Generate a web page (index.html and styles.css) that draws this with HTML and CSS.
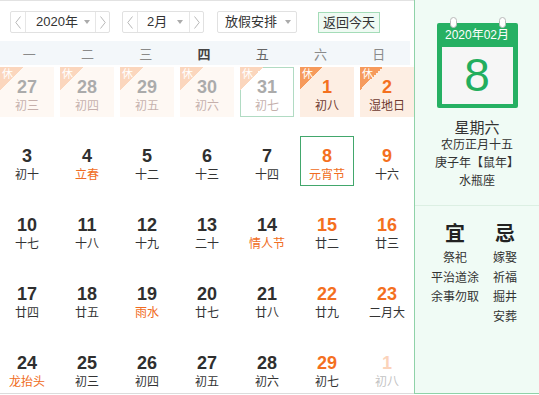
FILE: index.html
```html
<!DOCTYPE html>
<html lang="zh">
<head>
<meta charset="utf-8">
<title>万年历</title>
<link rel="stylesheet" href="styles.css">
</head>
<body>
<div class="wrap">
  <div class="cal">
    <div class="toolbar">
      <div class="sel sel-year">
        <span class="nav nav-prev"><svg width="6" height="13" viewBox="0 0 6 13"><polyline points="5.5,0.5 0.8,6.5 5.5,12.5" fill="none" stroke="#b8b8b8" stroke-width="1"/></svg></span>
        <span class="val">2020年<i class="caret"></i></span>
        <span class="nav nav-next"><svg width="6" height="13" viewBox="0 0 6 13"><polyline points="0.5,0.5 5.2,6.5 0.5,12.5" fill="none" stroke="#b8b8b8" stroke-width="1"/></svg></span>
      </div>
      <div class="sel sel-month">
        <span class="nav nav-prev"><svg width="6" height="13" viewBox="0 0 6 13"><polyline points="5.5,0.5 0.8,6.5 5.5,12.5" fill="none" stroke="#b8b8b8" stroke-width="1"/></svg></span>
        <span class="val">2月<i class="caret"></i></span>
        <span class="nav nav-next"><svg width="6" height="13" viewBox="0 0 6 13"><polyline points="0.5,0.5 5.2,6.5 0.5,12.5" fill="none" stroke="#b8b8b8" stroke-width="1"/></svg></span>
      </div>
      <div class="sel sel-holiday">
        <span class="val">放假安排<i class="caret"></i></span>
      </div>
      <div class="btn-today">返回今天</div>
    </div>

    <div class="weekhead">
      <span>一</span><span>二</span><span>三</span><span class="hl">四</span><span class="mid">五</span><span>六</span><span>日</span>
    </div>

    <div class="grid">
      <div class="cell rest faded"><i class="tag">休</i><b class="num">27</b><span class="lunar">初三</span></div>
      <div class="cell rest faded"><i class="tag">休</i><b class="num">28</b><span class="lunar">初四</span></div>
      <div class="cell rest faded"><i class="tag">休</i><b class="num">29</b><span class="lunar">初五</span></div>
      <div class="cell rest faded"><i class="tag">休</i><b class="num">30</b><span class="lunar">初六</span></div>
      <div class="cell rest faded boxed plain"><i class="tag">休</i><b class="num">31</b><span class="lunar">初七</span></div>
      <div class="cell rest wkend"><i class="tag">休</i><b class="num">1</b><span class="lunar">初八</span></div>
      <div class="cell rest wkend"><i class="tag">休</i><b class="num">2</b><span class="lunar">湿地日</span></div>

      <div class="cell"><b class="num">3</b><span class="lunar">初十</span></div>
      <div class="cell"><b class="num">4</b><span class="lunar fest">立春</span></div>
      <div class="cell"><b class="num">5</b><span class="lunar">十二</span></div>
      <div class="cell"><b class="num">6</b><span class="lunar">十三</span></div>
      <div class="cell"><b class="num">7</b><span class="lunar">十四</span></div>
      <div class="cell wkend today"><b class="num">8</b><span class="lunar fest">元宵节</span></div>
      <div class="cell wkend"><b class="num">9</b><span class="lunar">十六</span></div>

      <div class="cell"><b class="num">10</b><span class="lunar">十七</span></div>
      <div class="cell"><b class="num">11</b><span class="lunar">十八</span></div>
      <div class="cell"><b class="num">12</b><span class="lunar">十九</span></div>
      <div class="cell"><b class="num">13</b><span class="lunar">二十</span></div>
      <div class="cell"><b class="num">14</b><span class="lunar fest">情人节</span></div>
      <div class="cell wkend"><b class="num">15</b><span class="lunar">廿二</span></div>
      <div class="cell wkend"><b class="num">16</b><span class="lunar">廿三</span></div>

      <div class="cell"><b class="num">17</b><span class="lunar">廿四</span></div>
      <div class="cell"><b class="num">18</b><span class="lunar">廿五</span></div>
      <div class="cell"><b class="num">19</b><span class="lunar fest">雨水</span></div>
      <div class="cell"><b class="num">20</b><span class="lunar">廿七</span></div>
      <div class="cell"><b class="num">21</b><span class="lunar">廿八</span></div>
      <div class="cell wkend"><b class="num">22</b><span class="lunar">廿九</span></div>
      <div class="cell wkend"><b class="num">23</b><span class="lunar">二月大</span></div>

      <div class="cell"><b class="num">24</b><span class="lunar fest">龙抬头</span></div>
      <div class="cell"><b class="num">25</b><span class="lunar">初三</span></div>
      <div class="cell"><b class="num">26</b><span class="lunar">初四</span></div>
      <div class="cell"><b class="num">27</b><span class="lunar">初五</span></div>
      <div class="cell"><b class="num">28</b><span class="lunar">初六</span></div>
      <div class="cell wkend"><b class="num">29</b><span class="lunar">初七</span></div>
      <div class="cell wkend next-month"><b class="num">1</b><span class="lunar">初八</span></div>
    </div>
  </div>

  <div class="panel">
    <div class="panel-top">
      <div class="calicon">
        <i class="ring ring-l"></i><i class="ring ring-r"></i>
        <div class="ym">2020年02月</div>
        <div class="bigday">8</div>
      </div>
      <div class="weekday">星期六</div>
      <div class="info">农历正月十五</div>
      <div class="info">庚子年【鼠年】</div>
      <div class="info">水瓶座</div>
    </div>
    <div class="yiji">
      <div class="col">
        <div class="yj-title">宜</div>
        <div class="yj-item">祭祀</div>
        <div class="yj-item">平治道涂</div>
        <div class="yj-item">余事勿取</div>
      </div>
      <div class="col">
        <div class="yj-title">忌</div>
        <div class="yj-item">嫁娶</div>
        <div class="yj-item">祈福</div>
        <div class="yj-item">掘井</div>
        <div class="yj-item">安葬</div>
      </div>
    </div>
  </div>
</div>
</body>
</html>
```

FILE: styles.css
```css
* { box-sizing: border-box; }

html, body {
  margin: 0;
  padding: 0;
  background: #fff;
}

body {
  font-family: "Liberation Sans", "Noto Sans CJK SC", sans-serif;
  color: #333;
  font-size: 13px;
}

.wrap {
  display: flex;
  width: 539px;
  height: 394px;
}

/* ---------- left calendar ---------- */
.cal {
  width: 414px;
  border-top: 1px solid #e2e2e2;
  border-bottom: 1px solid #dcdcdc;
}

.toolbar {
  height: 40px;
  padding: 10px 0 0 10px;
  display: flex;
  align-items: flex-start;
}

.sel {
  display: flex;
  height: 22px;
  border: 1px solid #e1e1e1;
  border-radius: 2px;
  background: #fff;
}

.nav {
  display: flex;
  align-items: center;
  justify-content: center;
}

.nav-prev { width: 15px; border-right: 1px solid #e6e6e6; }
.nav-next { width: 14px; border-left: 1px solid #e6e6e6; }

.val {
  flex: 1;
  display: flex;
  align-items: center;
  font-size: 13px;
  color: #333;
  line-height: 20px;
}

.caret {
  margin-left: auto;
  width: 0;
  height: 0;
  border-left: 3px solid transparent;
  border-right: 3px solid transparent;
  border-top: 4px solid #ababab;
}

.sel-year { width: 100px; }
.sel-year .val { padding-left: 10px; }
.sel-year .caret { margin-right: 5px; }

.sel-month { width: 82px; margin-left: 12px; }
.sel-month .val { padding-left: 9px; }
.sel-month .caret { margin-right: 6px; }

.sel-holiday { width: 80px; margin-left: 13px; }
.sel-holiday .val { padding-left: 7px; }
.sel-holiday .caret { margin-right: 5px; }

.btn-today {
  margin-left: 21px;
  margin-top: 1px;
  width: 62px;
  height: 21px;
  line-height: 19px;
  text-align: center;
  font-size: 13px;
  color: #333;
  border: 1px solid #a4dcb8;
  background: #effaf3;
}

.weekhead {
  width: 410px;
  height: 24px;
  padding-right: 2px;
  background: #f3f7fa;
  display: grid;
  grid-template-columns: repeat(7, 1fr);
  align-items: center;
  text-align: center;
  font-size: 13px;
  color: #8a8a8a;
}

.weekhead .hl { color: #444; font-weight: bold; }
.weekhead .mid { color: #666; }

.grid {
  margin-top: 2px;
  display: grid;
  grid-template-columns: repeat(7, 54px);
  grid-auto-rows: 50px;
  column-gap: 6px;
  row-gap: 19px;
}

.cell {
  position: relative;
  display: flex;
  flex-direction: column;
  align-items: center;
  padding-top: 10px;
  border: 1px solid transparent;
}

.num {
  font-size: 18px;
  font-weight: bold;
  line-height: 20px;
  color: #2f2f2f;
  margin-top: -1px;
}

.lunar {
  font-size: 12px;
  line-height: 16px;
  margin-top: 1px;
  color: #333;
}

.lunar.fest { color: #f06c22; }

.wkend .num { color: #f4701f; }

.rest { background: #fdeee3; }
.rest .lunar { color: #6f3a30; }

.tag {
  position: absolute;
  left: -1px;
  top: -1px;
  width: 23px;
  height: 23px;
  background: linear-gradient(135deg, #f69a5c 50%, transparent 50%);
  color: #fff;
  font-style: normal;
  font-size: 11px;
  line-height: 12px;
  padding: 1px 0 0 2px;
}

.faded { opacity: 0.4; }
.boxed { border-color: #3fa86c; }
.plain { background: #fff; }

.today { border-color: #42a76c; }

.next-month { opacity: 0.3; }

/* ---------- right panel ---------- */
.panel {
  flex: 1;
  background: #f0fbf5;
  border-left: 1px solid #8fd2a8;
  border-bottom: 1px solid #8fd2a8;
}

.panel-top {
  height: 206px;
  border-bottom: 1px solid #dcefe3;
  display: flex;
  flex-direction: column;
  align-items: center;
  padding-top: 23px;
}

.calicon {
  position: relative;
  width: 81px;
  height: 85px;
  background: #26b063;
  border-radius: 2px;
}

.ring {
  position: absolute;
  top: -6px;
  width: 7px;
  height: 11px;
  border-radius: 4px;
  background: #fff;
  border: 1px solid #b9b9b9;
}

.ring-l { left: 13px; }
.ring-r { left: 62px; }

.ym {
  height: 24px;
  line-height: 25px;
  text-align: center;
  color: #fff;
  font-size: 12px;
}

.bigday {
  margin: 0 5px;
  height: 57px;
  background: #f6f6f6;
  color: #22ae5e;
  font-size: 46px;
  line-height: 56px;
  text-align: center;
}

.weekday {
  margin-top: 12px;
  font-size: 15px;
  line-height: 16px;
  color: #333;
}

.info {
  font-size: 12px;
  line-height: 18px;
  color: #333;
}

.yiji {
  display: flex;
  padding: 16px 0 0 15px;
}

.col {
  width: 50px;
  display: flex;
  flex-direction: column;
  align-items: center;
}

.yj-title {
  font-size: 20px;
  font-weight: bold;
  line-height: 24px;
  color: #222;
  margin-bottom: 3px;
}

.yj-item {
  font-size: 12px;
  line-height: 19.5px;
  color: #333;
  white-space: nowrap;
}
```
